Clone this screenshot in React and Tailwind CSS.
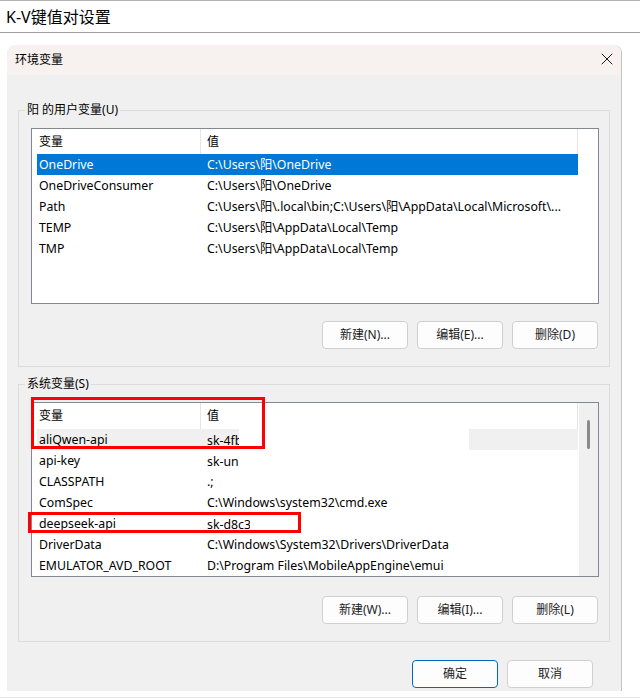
import { X } from 'lucide-react';

const userVars = [
  ['OneDrive', 'C:\\Users\\阳\\OneDrive'],
  ['OneDriveConsumer', 'C:\\Users\\阳\\OneDrive'],
  ['Path', 'C:\\Users\\阳\\.local\\bin;C:\\Users\\阳\\AppData\\Local\\Microsoft\\...'],
  ['TEMP', 'C:\\Users\\阳\\AppData\\Local\\Temp'],
  ['TMP', 'C:\\Users\\阳\\AppData\\Local\\Temp'],
];

// clip: width of the visible part of a redacted value
const systemVars = [
  ['aliQwen-api', 'sk-4fb2c9e1', 39, true],
  ['api-key', 'sk-un7d8a2', 39],
  ['CLASSPATH', '.;'],
  ['ComSpec', 'C:\\Windows\\system32\\cmd.exe'],
  ['deepseek-api', 'sk-d8c3f0a1', 50],
  ['DriverData', 'C:\\Windows\\System32\\Drivers\\DriverData'],
  ['EMULATOR_AVD_ROOT', 'D:\\Program Files\\MobileAppEngine\\emui'],
];

function Btn({ children, primary }) {
  return (
    <button
      type="button"
      className={
        primary
          ? 'flex h-[28px] w-[86px] items-center justify-center rounded-[4px] border border-[#0067c0] bg-[#fdfdfd] text-[12px] text-[#1b1b1b]'
          : 'flex h-[28px] w-[86px] items-center justify-center rounded-[4px] border border-[#d0d0d0] bg-[#fdfdfd] text-[12px] text-[#1b1b1b]'
      }
    >
      {children}
    </button>
  );
}

function ListHeader({ tall }) {
  return (
    <div className={tall ? 'flex h-[26px] items-center bg-white text-[12px]' : 'flex h-[25px] items-center bg-white text-[12px]'}>
      <div className="flex h-full w-[169px] items-center border-r border-[#e5e5e5] pl-[7px]">变量</div>
      <div className="flex h-full w-[377px] items-center border-r border-[#e5e5e5] pl-[6px]">值</div>
    </div>
  );
}

function Row({ name, value, selected }) {
  return (
    <div className={selected ? 'ml-[5px] flex h-[21px] w-[541px] items-center bg-[#0078d7] pt-px text-white' : 'ml-[5px] flex h-[21px] w-[541px] items-center pt-px'}>
      <div className="w-[163px] whitespace-nowrap pl-[2px]">{name}</div>
      <div className="whitespace-nowrap pl-[7px]">{value}</div>
    </div>
  );
}

function SysRow({ name, value, clip, hover }) {
  return (
    <div className={hover ? 'ml-[5px] flex h-[21px] w-[541px] items-center bg-[#f0f0f0]' : 'ml-[5px] flex h-[21px] w-[541px] items-center'}>
      <div className="w-[163px] whitespace-nowrap pl-[2px] pt-px">{name}</div>
      {clip ? (
        <>
          <div className="h-full overflow-hidden whitespace-nowrap pl-[7px] pt-px leading-[21px]" style={{ width: clip }}>{value}</div>
          {hover && <div className="h-full w-[230px] bg-white" />}
        </>
      ) : (
        <div className="whitespace-nowrap pl-[7px] pt-px">{value}</div>
      )}
    </div>
  );
}

export default function App() {
  return (
    <div className="relative h-[699px] w-[640px] overflow-hidden bg-white font-['Noto_Sans','Noto_Sans_CJK_SC',sans-serif] text-black">
      <div className="flex h-[33px] items-center border-y border-t-[#b4b4b4] border-b-[#a0a0a0] pl-[6px] text-[16px]">K-V键值对设置</div>

      <div className="flex">
        <div className="ml-[7px] mt-[12px] flex h-[646px] w-[615px] flex-col overflow-hidden rounded-t-[8px] border-r border-[#c4c4c4]">
          <div className="flex h-[30px] items-center justify-between bg-[#f7f1ef] pl-[8px] pr-[4px] text-[12px]">
            <span>环境变量</span>
            <X size={20} strokeWidth={1.2} className="-mt-[3px] text-[#1b1b1b]" />
          </div>

          <div className="flex-1 bg-[#f0f0f0] pt-[27px] text-[12px]">
            <fieldset className="ml-[11px] w-[592px] border border-[#dcdcdc] px-0 pb-[17px] pt-[10px]">
              <legend className="ml-[6px] px-[2px] leading-[16px]">阳 的用户变量(U)</legend>
              <div className="ml-[12px] flex h-[176px] w-[568px] flex-col border border-[#828790] bg-white text-[12.3px]">
                <ListHeader />
                {userVars.map(([name, value], i) => (
                  <Row key={name} name={name} value={value} selected={i === 0} />
                ))}
              </div>
              <div className="mt-[17px] flex justify-end gap-[9px] pr-[11px]">
                <Btn>新建(N)...</Btn>
                <Btn>编辑(E)...</Btn>
                <Btn>删除(D)</Btn>
              </div>
            </fieldset>

            <fieldset className="ml-[11px] mt-[9px] w-[592px] border border-[#dcdcdc] px-0 pb-[17px] pt-[10px]">
              <legend className="ml-[6px] px-[2px] leading-[16px]">系统变量(S)</legend>
              <div className="ml-[12px] flex h-[175px] w-[568px] overflow-hidden border border-[#828790] bg-white text-[12.3px]">
                <div className="flex w-[546px] flex-col">
                  <ListHeader tall />
                  {systemVars.map(([name, value, clip, hover]) => (
                    <SysRow key={name} name={name} value={value} clip={clip} hover={hover} />
                  ))}
                </div>
                <div className="ml-[1px] w-[19px] bg-[#f0f0f0] pl-[8px] pt-[17px]">
                  <div className="h-[29px] w-[3px] rounded-full bg-[#8a8a8a]" />
                </div>
              </div>
              <div className="mt-[19px] flex justify-end gap-[9px] pr-[11px]">
                <Btn>新建(W)...</Btn>
                <Btn>编辑(I)...</Btn>
                <Btn>删除(L)</Btn>
              </div>
            </fieldset>

            <div className="mt-[18px] flex justify-end gap-[9px] pr-[28px]">
              <Btn primary>确定</Btn>
              <Btn>取消</Btn>
            </div>
          </div>
        </div>
      </div>

      <div className="mt-[6px] border-t border-[#e6e6e6]" />

      <div className="absolute left-[31px] top-[397px] h-[52px] w-[234px] border-[3px] border-[#ff0000]" />
      <div className="absolute left-[28px] top-[512px] h-[21px] w-[273px] border-[3px] border-[#ff0000]" />
    </div>
  );
}
